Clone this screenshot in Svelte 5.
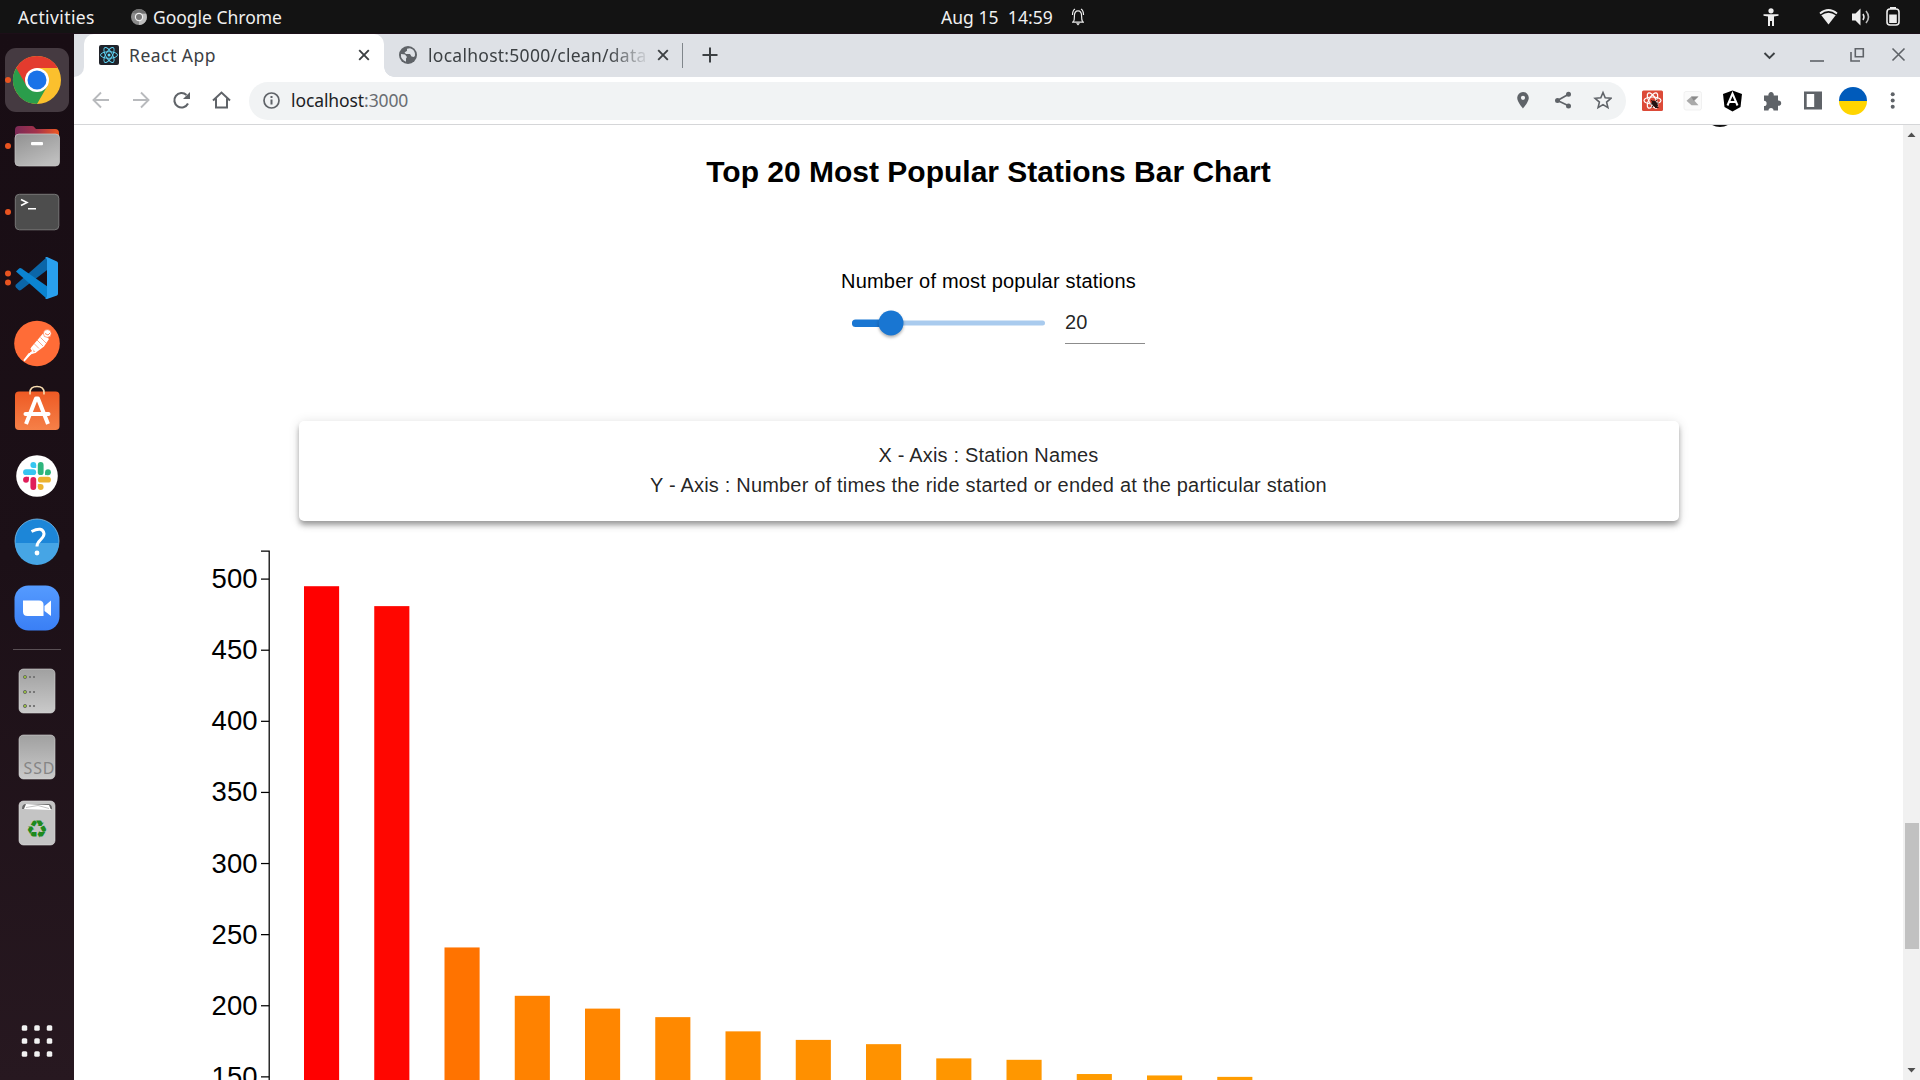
<script>
  const values = [495, 481, 241, 207, 198, 192, 182, 176, 173, 163, 162, 152, 151, 150];
  const ticks = [500, 450, 400, 350, 300, 250, 200, 150];
  const yOf = (v) => 579.1 + (500 - v) * 1.4222;
  const green = (v) => Math.round(((495 - v) / 365) * 165);
  const bars = values.map((v, i) => ({
    x: 304 + i * 70.25,
    y: yOf(v),
    fill: `rgb(255,${green(v)},0)`
  }));
</script>

<div class="screen">
  <header class="topbar">
    <span class="activities">Activities</span>
    <svg class="app-icon" width="16" height="16" viewBox="0 0 16 16">
      <circle cx="8" cy="8" r="8" fill="#8b8b8b" />
      <path d="M8 16A8 8 0 0 0 15 4.500H8z" fill="#bdbdbd" />
      <path d="M1.200 4A8 8 0 0 1 15 4.500H8z" fill="#6f6f6f" />
      <circle cx="8" cy="8" r="4.200" fill="#eee" />
      <circle cx="8" cy="8" r="3" fill="#777" />
    </svg>
    <span class="app-name">Google Chrome</span>
    <span class="clock">Aug 15&nbsp; 14:59</span>
    <svg class="bell" width="14" height="18" viewBox="0 0 14 18" fill="none" stroke="#eee">
      <path d="M1 14.200h12M2.500 13.500c1-1.500.9-3 .9-5.500 0-3 1.200-5.200 3.600-5.200s3.600 2.200 3.600 5.200c0 2.500 0 4 .9 5.500M1.500 7c0-3 .8-5 2.500-6M12.500 7c0-3-.8-5-2.500-6" stroke-width="1.200" />
      <path d="M5 15.300h4L7 17.500z" fill="#eee" stroke="none" />
    </svg>
    <div class="status">
      <svg width="16" height="18" viewBox="0 0 16 18" fill="#eee">
        <circle cx="8" cy="2.800" r="2.600" />
        <path d="M.5 6.200h15v1.600L11 8.500V18H9v-5H7v5H5V8.500L.5 7.800z" />
      </svg>
      <svg class="wifi" width="19" height="16" viewBox="0 0 19 16">
        <path d="M1 4.500Q9.500-2.500 18 4.500" fill="none" stroke="#eee" stroke-width="1.800" />
        <path d="M2.300 6.300Q9.500 1 16.700 6.300L9.500 15.500z" fill="#eee" />
      </svg>
      <svg class="sound" width="18" height="18" viewBox="0 0 18 18">
        <path d="M0 5.500h3.500L8.500.5v17L3.500 12.500H0z" fill="#eee" />
        <path d="M11 6q2 3 0 6" fill="none" stroke="#eee" stroke-width="1.500" />
        <path d="M14 3q5 6 0 12" fill="none" stroke="#bbb" stroke-width="1.600" />
      </svg>
      <svg class="battery" width="14" height="19" viewBox="0 0 14 19">
        <path d="M4 2V0h6v2" fill="#eee" />
        <rect x="1" y="2" width="12" height="16" rx="3" fill="none" stroke="#eee" stroke-width="1.600" />
        <path d="M3.200 7.500h7.600V16H3.200z" fill="#eee" />
      </svg>
    </div>
  </header>

  <div class="desktop">
    <nav class="dock">
      <div class="cell">
        <svg width="74" height="66" viewBox="0 0 74 66">
          <rect x="5" y="1" width="64" height="64" rx="11" fill="#453a41" />
          <circle cx="37" cy="33" r="24" fill="#fbc02d" />
          <path d="M37 33L16.200 21A24 24 0 0 0 37 57L47.400 39z" fill="#2a9d4b" />
          <path d="M16.200 21A24 24 0 0 1 57.800 21H37L26.600 39z" fill="#e33b2e" />
          <circle cx="37" cy="33" r="12" fill="#fff" />
          <circle cx="37" cy="33" r="9.500" fill="#1a73e8" />
          <circle cx="8" cy="33" r="3" fill="#e95420" />
        </svg>
      </div>
      <div class="cell">
        <svg width="74" height="66" viewBox="0 0 74 66">
          <defs>
            <linearGradient id="folder"><stop offset="0" stop-color="#7a2a56" /><stop offset=".5" stop-color="#a5324a" /><stop offset="1" stop-color="#f05a22" /></linearGradient>
            <linearGradient id="gray" x2=".6" y2="1"><stop offset="0" stop-color="#919191" /><stop offset="1" stop-color="#bdbdbd" /></linearGradient>
          </defs>
          <path d="M15 30V17q0-4 4-4h13q2 0 3 2l1 1h19q4 0 4 4v10z" fill="url(#folder)" />
          <rect x="15" y="21" width="44.500" height="32" rx="4" fill="url(#gray)" stroke="#c8c8c8" stroke-width=".7" />
          <rect x="31" y="29" width="12" height="3.200" rx="1" fill="#fff" />
          <circle cx="8" cy="33" r="3" fill="#e95420" />
        </svg>
      </div>
      <div class="cell">
        <svg width="74" height="66" viewBox="0 0 74 66">
          <rect x="15.300" y="15.300" width="43.500" height="35.500" rx="4" fill="#4d4d4d" stroke="#777" />
          <path d="M21 20.500l6 3-6 3M28 29.800h8" fill="none" stroke="#fff" stroke-width="1.600" />
          <circle cx="8" cy="33" r="3" fill="#e95420" />
        </svg>
      </div>
      <div class="cell">
        <svg width="74" height="66" viewBox="0 0 74 66">
          <path d="M16 39.500L47 12l4 10-30 23q-1.500 1-3-.5l-2-2q-1.500-1.500 0-3z" fill="#0b66a8" />
          <path d="M16 26.500l2.500-2.500q1.500-1.500 3-.5L51 44l-4 10z" fill="#0b84d0" />
          <path d="M47 12l10 4.500q1 .5 1 2v30q0 1.500-1 2L47 54q-1 .2-2-1 2 0 2-2V15q0-2-2-2 1-1.200 2-1z" fill="#29a0ee" />
          <circle cx="8" cy="28.500" r="3" fill="#e95420" />
          <circle cx="8" cy="37.500" r="3" fill="#e95420" />
        </svg>
      </div>
      <div class="cell">
        <svg width="74" height="66" viewBox="0 0 74 66">
          <circle cx="37" cy="32.500" r="22.800" fill="#ff6c37" />
          <path d="M43 22.500l6 5.500-5 7.500-8 6-5-5z" fill="#fff" />
          <circle cx="47.300" cy="22.500" r="3.900" fill="#fff" stroke="#ff6c37" stroke-width=".6" />
          <path d="M37 29l6 6M40.500 26.500l5.500 5.500M34 32.500l5 5" stroke="#ff6c37" stroke-width=".6" />
          <path d="M31 37l2 3L24 50M36 41l-7 2-5 6.500" fill="none" stroke="#fff" stroke-width="1.500" />
          <path d="M31 40.500l2.500 1-9 7z" fill="#fff" />
          <path d="M45 22.500l3 1.500 2-2" fill="none" stroke="#ff6c37" stroke-width=".8" />
        </svg>
      </div>
      <div class="cell">
        <svg width="74" height="66" viewBox="0 1 74 66">
          <defs><linearGradient id="bag" x2="0" y2="1"><stop offset="0" stop-color="#ee5a24" /><stop offset="1" stop-color="#f58048" /></linearGradient></defs>
          <rect x="15" y="15.500" width="44.500" height="38.500" rx="4" fill="url(#bag)" />
          <path d="M30 18.500v-2q0-6 7-6t7 6v2" fill="none" stroke="#f7dcb0" stroke-width="1.600" />
          <path d="M26 48L36 22.500h2L48 48" fill="none" stroke="#fff" stroke-width="4" stroke-linejoin="round" />
          <path d="M25.500 38h23" stroke="#fff" stroke-width="4" stroke-linecap="round" />
        </svg>
      </div>
      <div class="cell">
        <svg width="74" height="66" viewBox="0 0 74 66">
          <circle cx="37" cy="33" r="20.800" fill="#fff" />
          <g stroke-width="5.800" stroke-linecap="round">
            <path d="M26 29.200h7.200" stroke="#36c5f0" /><path d="M33.300 22v.1" stroke="#36c5f0" />
            <path d="M40.700 22v7.200" stroke="#2eb67d" /><path d="M48 29.200v.1" stroke="#2eb67d" />
            <path d="M40.800 36.700H48" stroke="#ecb22e" /><path d="M40.700 44v.1" stroke="#ecb22e" />
            <path d="M33.300 36.800V44" stroke="#e01e5a" /><path d="M26 36.700v.1" stroke="#e01e5a" />
          </g>
          <path d="M33.300 22h2.900v2.900h-2.900z" fill="#36c5f0" />
          <path d="M45.100 29.200H48v2.900h-2.900z" fill="#2eb67d" />
          <path d="M37.800 41.100h2.900V44h-2.900z" fill="#ecb22e" />
          <path d="M26 33.800h2.900v2.900H26z" fill="#e01e5a" />
        </svg>
      </div>
      <div class="cell">
        <svg width="74" height="66" viewBox="0 1 74 66">
          <circle cx="37" cy="33" r="22" fill="#1c86d8" stroke="#7cc0ee" stroke-width=".8" />
          <path d="M15 35h44a22 22 0 0 1-44 0z" fill="#46a5e5" />
          <path d="M31.500 23.500q11-5.500 12.500 2c.5 5.500-7 6.500-7 13" fill="none" stroke="#fff" stroke-width="3" />
          <circle cx="37" cy="45" r="2.400" fill="#fff" />
        </svg>
      </div>
      <div class="cell">
        <svg width="74" height="66" viewBox="0 0 74 66">
          <defs><linearGradient id="cam" x2="0" y2="1"><stop offset="0" stop-color="#559bff" /><stop offset="1" stop-color="#3a7ff5" /></linearGradient></defs>
          <rect x="14.500" y="10.500" width="45" height="45" rx="14" fill="url(#cam)" />
          <path d="M23 25.500h16q4.500 0 4.500 4.500v11H27.500Q23 41 23 36.500z" fill="#fff" />
          <path d="M44.500 31l6.500-5.500v15.500l-6.500-5z" fill="#fff" />
        </svg>
      </div>
      <div class="divider"><span></span></div>
      <div class="cell">
        <svg width="74" height="66" viewBox="0 0 74 66">
          <defs><linearGradient id="drive" x2="0" y2="1"><stop offset="0" stop-color="#a0a0a0" /><stop offset="1" stop-color="#cacaca" /></linearGradient></defs>
          <rect x="19" y="11" width="36" height="44" rx="4.500" fill="url(#drive)" stroke="#d5d5d5" stroke-width=".6" />
          {#each [19, 34, 48] as y}
            <circle cx="25" cy={y} r="1.600" fill="#9bc53d" stroke="#666" stroke-width=".9" />
            <path d="M29 {y}h2M33 {y}h2" stroke="#777" stroke-width="1.800" />
          {/each}
        </svg>
      </div>
      <div class="cell">
        <svg width="74" height="66" viewBox="0 0 74 66">
          <rect x="19" y="11" width="36" height="44" rx="4.500" fill="url(#drive)" stroke="#d5d5d5" stroke-width=".6" />
          <text x="23.500" y="50" class="ssd" textLength="31">SSD</text>
        </svg>
      </div>
      <div class="cell">
        <svg width="74" height="66" viewBox="0 0 74 66">
          <rect x="19" y="11" width="36" height="44" rx="4.500" fill="#c4c4c4" stroke="#ddd" stroke-width=".6" />
          <path d="M22 19q0-5 4-5h22q4 0 4 5z" fill="#666" />
          <path d="M24 19l2-5 23 1 2 5z" fill="#fff" />
          <path d="M26 17.500l12-2 11 3" fill="none" stroke="#999" stroke-width=".6" />
          <text x="37" y="48" class="recycle" text-anchor="middle">♻</text>
        </svg>
      </div>
      <svg class="apps" width="74" height="34" viewBox="0 0 74 34">
        {#each [4, 17, 30] as y}
          {#each [24.500, 37, 49.500] as x}
            <rect x={x - 2.750} y={y - 2.750} width="5.500" height="5.500" rx="1.500" fill="#f2f2f2" />
          {/each}
        {/each}
      </svg>
    </nav>

    <div class="browser">
      <div class="tabs">
        <div class="edge"></div>
        <div class="tab">
          <svg width="20" height="20" viewBox="0 0 20 20" fill="none" stroke="#61dafb" stroke-width=".9">
            <rect width="20" height="20" rx="2" fill="#20232a" stroke="none" />
            <ellipse cx="10" cy="10" rx="8.500" ry="3.300" />
            <ellipse cx="10" cy="10" rx="8.500" ry="3.300" transform="rotate(60 10 10)" />
            <ellipse cx="10" cy="10" rx="8.500" ry="3.300" transform="rotate(120 10 10)" />
            <circle cx="10" cy="10" r="1.500" fill="#61dafb" stroke="none" />
          </svg>
          <span class="title first">React App</span>
          <svg class="x" width="12" height="12" viewBox="0 0 12 12"><path d="M1.200 1.200l9.600 9.600M10.800 1.200l-9.600 9.600" stroke="#3c4043" stroke-width="1.900" /></svg>
        </div>
        <div class="tab2">
          <svg width="18" height="18" viewBox="0 0 18 18">
            <circle cx="9" cy="9" r="9" fill="#5f6368" />
            <path d="M2 8l4 .5 2 2.500-1 1.500v3.300A7 7 0 0 1 2 8zM11 2.300l-3 .5v2L5.500 6.500 7 8h4l1.500 2.500L15 11l1-1.500A7 7 0 0 0 11 2.300z" fill="#dee1e6" />
          </svg>
          <span class="title second">localhost:5000/clean/data</span>
          <svg class="x2" width="12" height="12" viewBox="0 0 12 12"><path d="M1.200 1.200l9.600 9.600M10.800 1.200l-9.600 9.600" stroke="#3c4043" stroke-width="1.900" /></svg>
        </div>
        <span class="tabsep"></span>
        <svg class="plus" width="16" height="16" viewBox="0 0 16 16"><path d="M8 .5v15M.5 8h15" stroke="#3c4043" stroke-width="2" /></svg>
        <svg class="winctl" width="144" height="16" viewBox="0 0 144 16" fill="none" stroke="#5f6368" stroke-width="1.600">
          <path d="M2.500 6l5 5 5-5" stroke="#3c4043" stroke-width="1.900" />
          <path d="M48 14h14" />
          <path d="M93.300 1.800h8v8h-8zM89 5v9h9" />
          <path d="M130.500 1.500l12 12M142.500 1.500l-12 12" />
        </svg>
      </div>

      <div class="toolbar">
        <svg class="nav" width="140" height="20" viewBox="0 0 140 20" fill="none" stroke-width="1.900">
          <path d="M17 10H2M9 2.500L1.500 10 9 17.500" stroke="#b8babd" />
          <path d="M41 10h15M49 2.500l7.500 7.500-7.500 7.500" stroke="#b8babd" />
          <path d="M96 13.500A7.200 7.200 0 1 1 94.500 5" stroke="#5f6368" stroke-width="2.100" />
          <path d="M98 2v7h-7z" fill="#5f6368" />
          <path d="M121 10.500l8.500-8 8.500 8M124 8.500v9h11v-9" stroke="#5f6368" stroke-width="2" />
        </svg>
        <div class="omnibox">
          <svg width="17" height="17" viewBox="0 0 17 17"><circle cx="8.500" cy="8.500" r="7.500" fill="none" stroke="#5f6368" stroke-width="1.700" /><path d="M8.500 7.500v5M8.500 4v2" stroke="#5f6368" stroke-width="2" /></svg>
          <span class="url">localhost<i>:3000</i></span>
          <svg class="omniicons" width="96" height="20" viewBox="0 0 96 20">
            <path d="M7 2a5.800 5.800 0 0 0-5.800 5.800C1.200 12 7 18.500 7 18.500s5.800-6.500 5.800-10.700A5.800 5.800 0 0 0 7 2zm0 3.700a2.100 2.100 0 1 1 0 4.200 2.100 2.100 0 0 1 0-4.200z" fill="#5f6368" />
            <path d="M53 4L41.500 10.500 53 16" fill="none" stroke="#5f6368" stroke-width="1.700" />
            <circle cx="52.500" cy="4.200" r="2.500" fill="#5f6368" /><circle cx="41.500" cy="10.500" r="2.500" fill="#5f6368" /><circle cx="52.500" cy="16" r="2.500" fill="#5f6368" />
            <path d="M87 2.500l2.200 5.300 5.700.5-4.300 3.800 1.300 5.500-4.900-3-4.900 3 1.300-5.500-4.300-3.800 5.700-.5z" fill="none" stroke="#5f6368" stroke-width="1.600" />
          </svg>
        </div>
        <svg class="ext" width="264" height="28" viewBox="0 0 264 28">
          <rect x="0" y="3.500" width="21" height="20.500" rx="1.500" fill="#dc4a38" />
          <g fill="none" stroke="#fff" stroke-width="1.200">
            <ellipse cx="10.500" cy="13.500" rx="8.500" ry="3.500" />
            <ellipse cx="10.500" cy="13.500" rx="8.500" ry="3.500" transform="rotate(60 10.500 13.500)" />
            <ellipse cx="10.500" cy="13.500" rx="8.500" ry="3.500" transform="rotate(120 10.500 13.500)" />
          </g>
          <ellipse cx="12.800" cy="17" rx="2.200" ry="4" fill="#211" transform="rotate(-40 12.800 17)" />
          <path d="M8.500 17l8-1M10 20.500l5-8M13 20.500h3.500M9 13.500l3 1.500" stroke="#211" stroke-width="1" />
          <rect x="42" y="4.500" width="17.500" height="18.500" rx="2" fill="#fafafa" stroke="#eee" stroke-width=".8" />
          <path d="M44.500 13.800l5-4.300h7l-4 4.300 4 4.500h-7z" fill="#a9a9a9" />
          <path d="M49 9.500h7.500l-5 4.300z" fill="#777" opacity=".6" />
          <path d="M90.500 3.500l9.500 3.500-1.500 13-8 4.500-8-4.500L81 7z" fill="#000" />
          <path d="M85.500 18.500l5-12 5 12M87.500 15h6" fill="none" stroke="#fff" stroke-width="2" />
          <path d="M122 8.500h4.500a2.700 2.700 0 1 1 5.200 0h4.300v5a2.700 2.700 0 1 1 0 5.300v4.700h-4.500a2.500 2.500 0 0 0-5 0H122V19a2.600 2.600 0 0 0 0-5.200z" fill="#5f6368" />
          <path d="M162 4.500h18v18h-18zM164.700 7v13h7.500V7z" fill="#5f6368" fill-rule="evenodd" />
          <path d="M197 14a14 14 0 0 1 28 0z" fill="#005bbb" />
          <path d="M197 14a14 14 0 0 0 28 0z" fill="#ffd500" />
          <circle cx="250.700" cy="7.200" r="2" fill="#5f6368" /><circle cx="250.700" cy="13.500" r="2" fill="#5f6368" /><circle cx="250.700" cy="19.800" r="2" fill="#5f6368" />
        </svg>
      </div>

      <div class="viewport">
        <main class="page">
          <span class="clipped"></span>
          <h1>Top 20 Most Popular Stations Bar Chart</h1>
          <p class="label">Number of most popular stations</p>
          <div class="controls">
            <svg width="214" height="38" viewBox="0 0 214 38">
              <rect x="11" y="15.500" width="193" height="5" rx="2.500" fill="#a9cbee" />
              <rect x="11" y="14.500" width="40" height="7.500" rx="3.500" fill="#1976d2" />
              <circle class="thumb" cx="50" cy="18" r="12.500" fill="#1976d2" />
            </svg>
            <div class="input">20</div>
          </div>
          <section class="card">
            <div>X - Axis : Station Names</div>
            <div>Y - Axis : Number of times the ride started or ended at the particular station</div>
          </section>
          <svg class="chart" width="1829" height="540" viewBox="74 540 1829 540">
            <path d="M261 551.100H269.200V1080" fill="none" stroke="#000" stroke-width="1.250" />
            {#each ticks as t}
              <path d="M261 {yOf(t)}h8.200" stroke="#000" stroke-width="1.250" />
              <text x="257.500" y={yOf(t) + 9} text-anchor="end">{t}</text>
            {/each}
            {#each bars as b}
              <rect x={b.x} y={b.y} width="35.120" height={1090 - b.y} fill={b.fill} />
            {/each}
          </svg>
        </main>
        <div class="scrollbar">
          <svg width="17" height="17" viewBox="0 0 17 17"><path d="M4.500 12h8l-4-4.500z" fill="#505050" /></svg>
          <span class="handle"></span>
          <svg width="17" height="17" viewBox="0 0 17 17"><path d="M4.500 5h8l-4 4.500z" fill="#505050" /></svg>
        </div>
      </div>
    </div>
  </div>
</div>

<style>
  :global(body) { margin: 0; }
  .screen { width: 1920px; height: 1080px; display: flex; flex-direction: column; overflow: hidden; background: #fff; font-family: "Noto Sans", sans-serif; }
  svg { display: block; flex: none; }
  span { white-space: nowrap; }

  .topbar { height: 34px; flex: none; display: flex; align-items: center; background: #131313; color: #f0f0f0; font-size: 17.5px; box-sizing: border-box; border-bottom: 1px solid #1c0f18; }
  .activities { margin-left: 18px; width: 113px; letter-spacing: .4px; }
  .app-name { margin-left: 6px; width: 788px; letter-spacing: -.02px; }
  .clock { width: 130px; letter-spacing: .05px; }
  .status { margin-left: 678px; display: flex; align-items: center; }
  .wifi { margin-left: 40px; }
  .sound { margin-left: 14px; }
  .battery { margin-left: 16px; }

  .desktop { flex: 1; display: flex; min-height: 0; }
  .dock { width: 74px; flex: none; display: flex; flex-direction: column; padding-top: 13px; box-sizing: border-box; background: linear-gradient(#180d14, #1c1017 50%, #271820); }
  .cell { height: 66px; flex: none; }
  .divider { height: 17px; display: flex; align-items: center; justify-content: center; }
  .divider span { width: 48px; height: 1px; background: #5a5055; }
  .ssd { font: 16px "Noto Sans", sans-serif; fill: #858585; }
  .recycle { font: 25px "DejaVu Sans", sans-serif; fill: #1e8a1e; }
  .apps { margin-top: auto; margin-bottom: 22px; }

  .browser { flex: 1; display: flex; flex-direction: column; min-width: 0; }
  .tabs { height: 43px; flex: none; display: flex; align-items: center; background: #dee1e6; }
  .edge { width: 10px; align-self: stretch; background: #fff; }
  .edge::before { content: ""; display: block; height: 43px; background: #dee1e6; border-bottom-right-radius: 10px; }
  .tab { width: 300px; height: 43px; box-sizing: border-box; padding-left: 15px; padding-bottom: 1px; display: flex; align-items: center; background: #fff; border-radius: 10px 10px 0 0; }
  .title { font-size: 17.5px; color: #3c4043; line-height: 24px; padding-bottom: 1px; }
  .first { margin-left: 10px; width: 229px; letter-spacing: .5px; }
  .tab2 { width: 298px; height: 43px; display: flex; align-items: center; position: relative; padding-left: 15px; padding-bottom: 1px; box-sizing: border-box; }
  .tab2::before { content: ""; position: absolute; left: 0; bottom: 0; width: 10px; height: 10px; background: radial-gradient(circle at 100% 0, transparent 9.5px, #fff 10px); }
  .second { margin-left: 11px; width: 220px; overflow: hidden; letter-spacing: .27px; mask-image: linear-gradient(90deg, #000 82%, transparent 101%); }
  .x2 { margin-left: 9px; }
  .tabsep { width: 1px; height: 25px; background: #80868b; }
  .plus { margin-left: 19px; margin-bottom: 1px; }
  .winctl { margin-left: auto; margin-right: 14px; margin-bottom: 1px; }

  .toolbar { height: 48px; flex: none; box-sizing: border-box; display: flex; align-items: center; border-bottom: 1px solid #d5d6d8; background: #fff; }
  .nav { margin-left: 18px; margin-bottom: 1px; }
  .omnibox { margin-left: 17px; width: 1377px; height: 38px; border-radius: 19px; background: #f1f3f4; display: flex; align-items: center; padding-left: 14px; box-sizing: border-box; }
  .url { margin-left: 11px; padding-bottom: 1px; font-size: 17.5px; color: #202124; letter-spacing: -.1px; }
  .url i { font-style: normal; color: #696d72; }
  .omniicons { margin-left: auto; margin-right: 14px; margin-bottom: 1px; }
  .ext { margin-left: 16px; }

  .viewport { flex: 1; display: flex; min-height: 0; }
  .page { flex: 1; min-width: 0; overflow: hidden; position: relative; display: flex; flex-direction: column; align-items: center; font-family: "Liberation Sans", Arial, sans-serif; color: #000; }
  .clipped { position: absolute; left: 1630px; top: -30px; width: 32px; height: 32px; border-radius: 50%; background: #111; }
  h1 { margin: 29px 0 0; font-size: 30px; line-height: 36px; font-weight: 700; }
  .label { margin: 79px 0 0; font-size: 20px; line-height: 24px; letter-spacing: .1876px; }
  .controls { margin-top: 12px; margin-left: 9px; height: 39px; display: flex; }
  .thumb { filter: drop-shadow(0 2px 1.500px rgba(0, 0, 0, .3)); }
  .input { margin-left: 10px; width: 80px; box-sizing: border-box; border-bottom: 1px solid #8c8c8c; font-size: 20px; line-height: 34px; letter-spacing: .1876px; color: rgba(0, 0, 0, .87); }
  .card { margin-top: 77px; width: 1380px; height: 100px; padding: 19px 20px; box-sizing: border-box; border-radius: 5px; text-align: center; font-size: 20px; line-height: 30px; letter-spacing: .1876px; color: rgba(0, 0, 0, .87); flex: none; box-shadow: 0 3.750px 5px -1.250px rgba(0, 0, 0, .25), 0 5px 6px rgba(0, 0, 0, .14), 0 1.250px 12px rgba(0, 0, 0, .12); }
  .chart { margin-top: 19px; }
  .chart text { font: 27.500px "Liberation Sans", Arial, sans-serif; }

  .scrollbar { width: 17px; flex: none; background: #f1f1f1; display: flex; flex-direction: column; }
  .handle { margin: 681px 1px 0 2px; height: 126px; background: #c1c1c1; }
  .scrollbar svg:last-child { margin-top: auto; }
</style>
